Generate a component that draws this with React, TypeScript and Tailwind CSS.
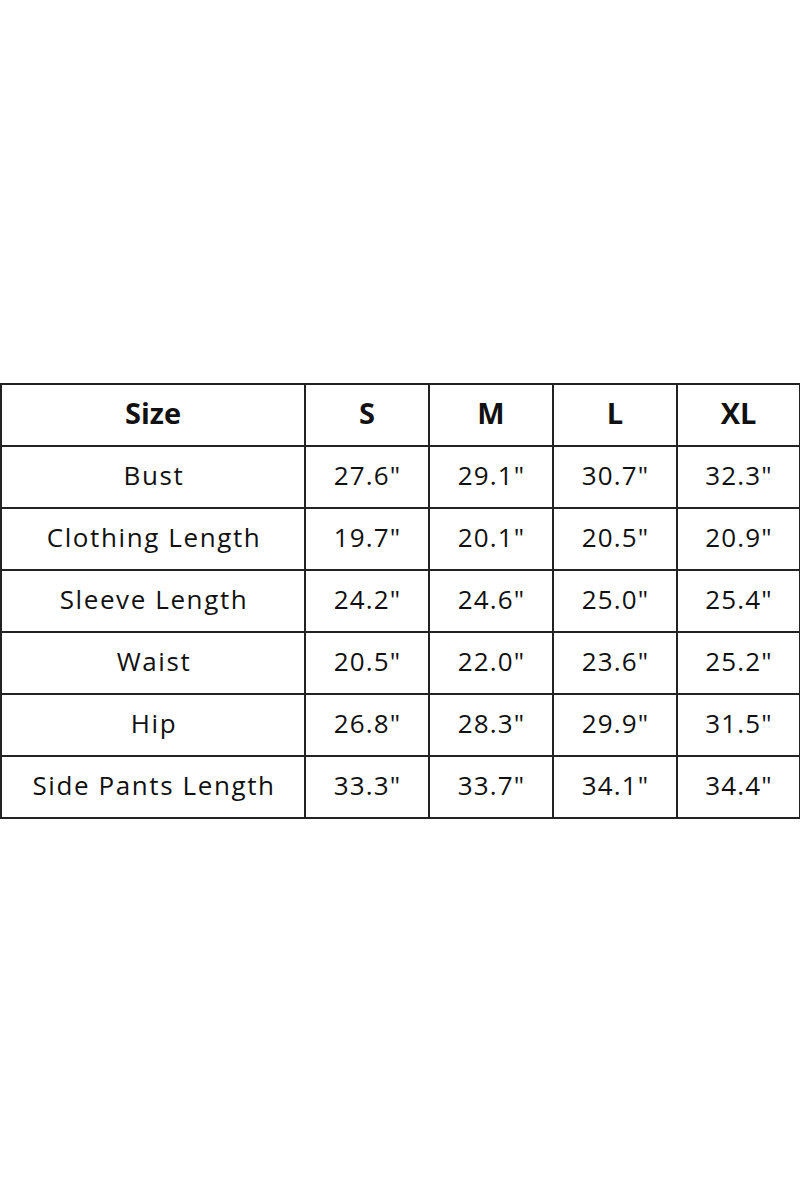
const headers = ['Size', 'S', 'M', 'L', 'XL'];

const rows: string[][] = [
  ['Bust', '27.6"', '29.1"', '30.7"', '32.3"'],
  ['Clothing Length', '19.7"', '20.1"', '20.5"', '20.9"'],
  ['Sleeve Length', '24.2"', '24.6"', '25.0"', '25.4"'],
  ['Waist', '20.5"', '22.0"', '23.6"', '25.2"'],
  ['Hip', '26.8"', '28.3"', '29.9"', '31.5"'],
  ['Side Pants Length', '33.3"', '33.7"', '34.1"', '34.4"'],
];

export default function App() {
  return (
    <div className="w-[800px] h-[1200px] bg-white pt-[383px] font-['Open_Sans',sans-serif] text-[#111]">
      <table className="w-[799px] border-collapse table-fixed">
        <colgroup>
          <col className="w-[304px]" />
          <col className="w-[124px]" />
          <col className="w-[124px]" />
          <col className="w-[124px]" />
          <col className="w-[123px]" />
        </colgroup>
        <thead>
          <tr className="h-[62px]">
            {headers.map((h) => (
              <th key={h} className="border-2 border-[#222] text-center text-[29px] leading-none font-bold p-0 pb-1.5">
                {h}
              </th>
            ))}
          </tr>
        </thead>
        <tbody>
          {rows.map((r) => (
            <tr key={r[0]} className="h-[62px]">
              {r.map((c, i) => (
                <td
                  key={i}
                  className={`border-2 border-[#222] text-center text-[26px] leading-none p-0 pb-1 ${
                    i === 0 ? 'tracking-[1.6px] pl-[2px]' : 'tracking-[1.1px] pl-[1px]'
                  }`}
                >
                  {c}
                </td>
              ))}
            </tr>
          ))}
        </tbody>
      </table>
    </div>
  );
}
